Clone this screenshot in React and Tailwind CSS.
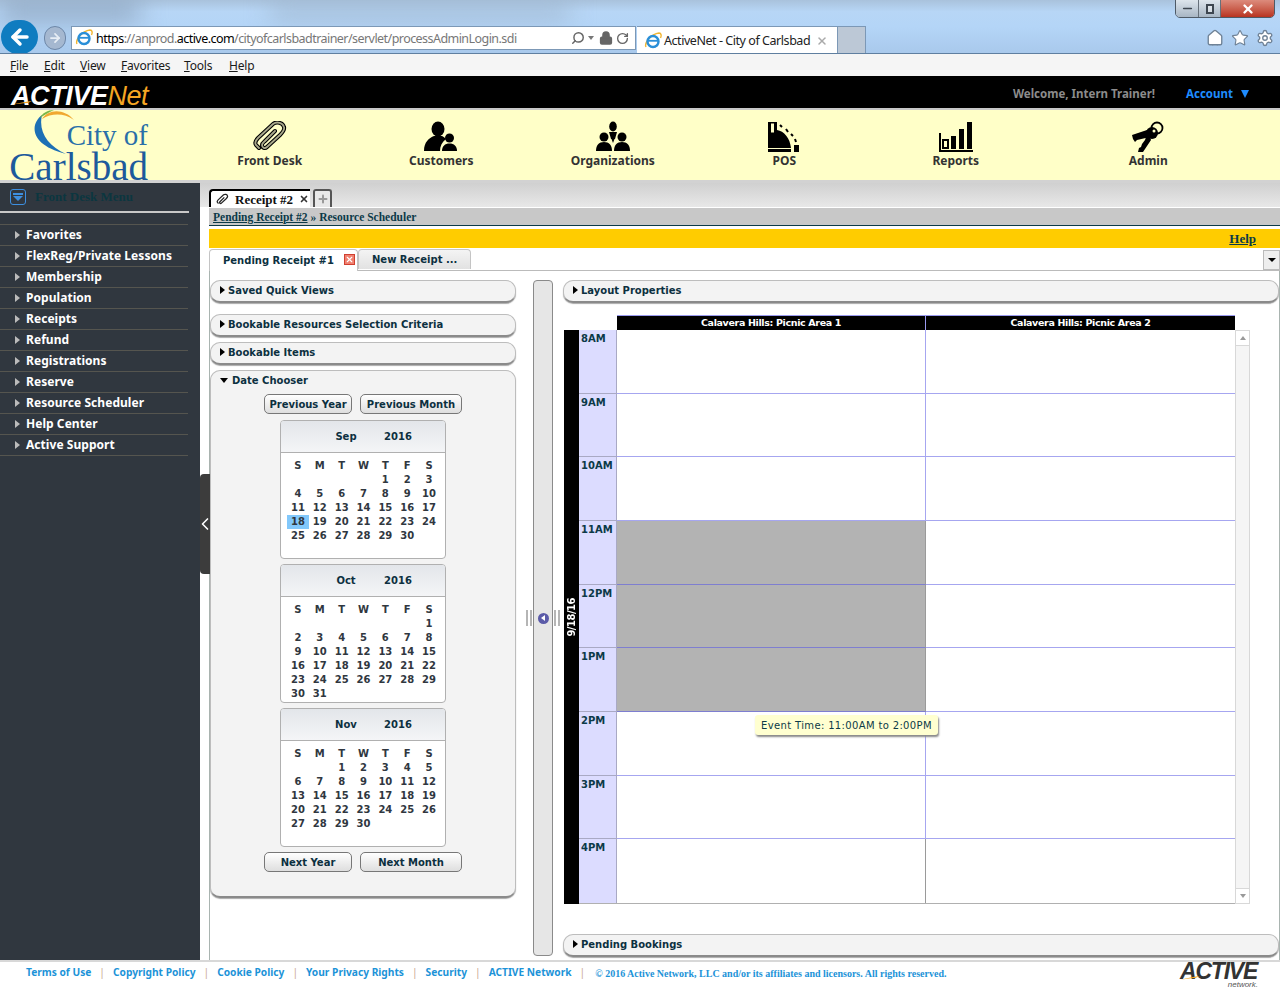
import { Search, Lock, RotateCw, Home, Star, Settings, ChevronLeft, ArrowLeft, ArrowRight, X, Plus, Minus } from 'lucide-react';

const verdana = 'font-["DejaVu_Sans",sans-serif]';
const tahoma = 'font-["Noto_Sans",sans-serif]';
const serif = 'font-["Liberation_Serif",serif]';
const arial = 'font-["Liberation_Sans",sans-serif]';

const menuItems = [
  'Favorites',
  'FlexReg/Private Lessons',
  'Membership',
  'Population',
  'Receipts',
  'Refund',
  'Registrations',
  'Reserve',
  'Resource Scheduler',
  'Help Center',
  'Active Support',
];

const footerLinks = ['Terms of Use', 'Copyright Policy', 'Cookie Policy', 'Your Privacy Rights', 'Security', 'ACTIVE Network'];
const hours = ['8AM', '9AM', '10AM', '11AM', '12PM', '1PM', '2PM', '3PM', '4PM'];

function IeIcon() {
  return (
    <svg width="18" height="18" viewBox="0 0 18 18" className="shrink-0">
      <path d="M2 15 C0 11 7 2 15 1 C17.500 1 17.500 4 16.500 6" fill="none" stroke="#f2b632" strokeWidth="1.400" />
      <circle cx="9" cy="9.500" r="5.500" fill="none" stroke="#2a8fd8" strokeWidth="2.400" />
      <path d="M4 8.800 H14.500" stroke="#2a8fd8" strokeWidth="1.800" />
      <path d="M14 13 L10 15" stroke="#2a8fd8" strokeWidth="1.800" />
    </svg>
  );
}

function FrontDeskIcon() {
  return (
    <svg width="36" height="32" viewBox="0 0 36 32">
      <path d="M7 27 L4 24 C2 21 4 19 6 17 L21 3 C25 0 31 2 32 6 C33 9 30 12 28 14 L15 26 C13 28 10 27 10 24 C10 22 12 21 13 20 L23 10" fill="none" stroke="#000" strokeWidth="4" strokeLinecap="round" />
      <path d="M7 27 L4 24 C2 21 4 19 6 17 L21 3 C25 0 31 2 32 6 C33 9 30 12 28 14 L15 26 C13 28 10 27 10 24 C10 22 12 21 13 20 L23 10" fill="none" stroke="#a9a98c" strokeWidth="1.800" strokeLinecap="round" />
    </svg>
  );
}

function CustomersIcon() {
  return (
    <svg width="36" height="32" viewBox="0 0 36 32">
      <ellipse cx="15" cy="8" rx="6.500" ry="7.500" />
      <path d="M1 30 C1 21 6 17 11 15 L19 15 C21 16 22 17 23 18 C19 21 17 25 17 30 Z" />
      <circle cx="26.500" cy="17" r="4.500" />
      <path d="M19 30 C19 25 22 22.500 26.500 22.500 C31 22.500 34 25 34 30 Z" />
    </svg>
  );
}

function OrganizationsIcon() {
  return (
    <svg width="36" height="32" viewBox="0 0 36 32">
      <ellipse cx="18" cy="5.500" rx="3.800" ry="5" />
      <path d="M14 11 H22 L20 18 H19.500 L18 22 L16.500 18 H16 Z" />
      <circle cx="9" cy="16" r="4.500" />
      <path d="M1 30 C1 24 4 21 9 21 C14 21 17 24 17 30 Z" />
      <circle cx="27" cy="16" r="4.500" />
      <path d="M19 30 C19 24 22 21 27 21 C32 21 35 24 35 30 Z" />
    </svg>
  );
}

function PosIcon() {
  return (
    <svg width="36" height="32" viewBox="0 0 36 32">
      <path d="M2 1 H11 V9 C18 10 24 17 25 27 H2 Z" />
      <rect x="5" y="2.500" width="3" height="9" fill="#ffffc8" />
      <rect x="2" y="28" width="23" height="3" />
      <rect x="28" y="24" width="5" height="7" />
      <path d="M14 4 L16 6 M20 8 L22 11 M25 13 L27 15 M29 18 L30 21" stroke="#000" strokeWidth="2" />
    </svg>
  );
}

function ReportsIcon() {
  return (
    <svg width="36" height="32" viewBox="0 0 36 32">
      <path d="M2 12 V30 H35" fill="none" stroke="#000" strokeWidth="2" />
      <rect x="5" y="19" width="5" height="8" fill="none" stroke="#000" strokeWidth="2" />
      <rect x="13" y="15" width="5" height="13" />
      <rect x="21" y="8" width="5" height="20" />
      <rect x="29" y="1" width="5" height="27" />
    </svg>
  );
}

function AdminIcon() {
  return (
    <svg width="36" height="32" viewBox="0 0 36 32">
      <circle cx="27" cy="7" r="5.500" fill="none" stroke="#000" strokeWidth="1.800" />
      <path d="M18 10 L21 19 L13 31 L8 31 L9 27 L11 26 L12 23 L15 19 Z" />
      <path d="M2 14 L17 9 L20 16 L7 19 L5 21 L3 18 Z" />
      <circle cx="22" cy="12" r="6" />
      <circle cx="24" cy="10" r="1.500" fill="#ffffc8" />
    </svg>
  );
}

const navItems = [
  { label: 'Front Desk', icon: <FrontDeskIcon /> },
  { label: 'Customers', icon: <CustomersIcon /> },
  { label: 'Organizations', icon: <OrganizationsIcon /> },
  { label: 'POS', icon: <PosIcon /> },
  { label: 'Reports', icon: <ReportsIcon /> },
];

function Arrow({ open }) {
  if (open) {
    return <span className="w-0 h-0 border-x-[4px] border-x-transparent border-t-[5px] border-t-black" />;
  }
  return <span className="w-0 h-0 border-y-[4px] border-y-transparent border-l-[5px] border-l-black" />;
}

function Panel({ title, className = '' }) {
  return (
    <div className={`h-[23px] flex items-center gap-[3px] pl-[9px] pb-[2px] rounded-[10px] border border-[#bdbdbd] border-b-[#8a8a8a] border-b-2 bg-[#f3f3f3] shadow-[0_1px_1px_#aaa] ${className}`}>
      <Arrow />
      <span className={`${verdana} text-[10px] font-bold text-[#0c3040]`}>{title}</span>
    </div>
  );
}

function Button({ label, width }) {
  return (
    <button className={`${width} h-[20px] rounded-[5px] border border-[#777] bg-gradient-to-b from-white to-[#dedede] ${verdana} text-[10px] font-bold text-[#0c3040]`}>
      {label}
    </button>
  );
}

function Calendar({ month, offset, days, selected }) {
  const cells = [...Array(offset).fill(''), ...Array.from({ length: days }, (_, i) => i + 1)];
  return (
    <div className={`w-[166px] h-[139px] rounded-[4px] border border-[#b0b0b0] bg-white overflow-hidden ${verdana} text-[10px] font-bold`}>
      <div className="h-[32px] flex items-center pl-[40px] border-b border-[#b0b0b0] bg-gradient-to-b from-[#e3e6ea] to-[#f4f5f7] text-[#0c3040]">
        <span className="w-[50px] text-center">{month}</span>
        <span className="w-[54px] text-center">2016</span>
      </div>
      <div className="grid grid-cols-7 w-[153px] ml-[6px] mt-[6px] text-center text-[#30373f]">
        {['S', 'M', 'T', 'W', 'T', 'F', 'S'].map((d, i) => (
          <span key={i} className="h-[14px] leading-[14px]">{d}</span>
        ))}
        {cells.map((d, i) => (
          <span key={i} className={`h-[14px] leading-[14px] ${d === selected ? 'bg-[#82c8fb]' : ''}`}>{d}</span>
        ))}
      </div>
    </div>
  );
}

function BrowserChrome() {
  return (
    <div className="relative h-[54px] shrink-0 bg-[linear-gradient(180deg,#a9c2dc_0%,#b7d6f6_22%,#b4d5f7_50%,#a9c9ec_100%)] overflow-hidden border-b border-[#5f7fa0]">
      <div className="absolute left-[270px] top-[4px] w-[300px] h-[14px] bg-[#9db4cc] blur-md" />
      <div className="absolute left-[0px] top-[0px] w-[140px] h-[20px] bg-[#8fa6c0] blur-md" />

      <div className="absolute left-[1px] top-[20px] w-[37px] h-[34px] rounded-full bg-[#0f7cc0] flex items-center justify-center">
        <ArrowLeft size={24} strokeWidth={3.500} className="text-white" />
      </div>
      <div className="absolute left-[44px] top-[26px] w-[22px] h-[24px] rounded-full border border-[#6d87a8] bg-[#a5b8d0] flex items-center justify-center">
        <ArrowRight size={14} strokeWidth={3} className="text-[#e8eef5]" />
      </div>

      <div className="absolute left-[71px] top-[26px] w-[565px] h-[24px] flex items-center bg-white border border-[#7c98b6] pl-[3px] pr-[6px] gap-[3px]">
        <IeIcon />
        <span className={`${tahoma} pt-[2px] text-[12.500px] tracking-[-0.550px] text-[#777] leading-none`}>
          <span className="text-black">https</span>://anprod.<span className="text-black">active.com</span>/cityofcarlsbadtrainer/servlet/processAdminLogin.sdi
        </span>
        <span className="ml-auto flex items-center gap-[3px] text-[#666]">
          <Search size={14} strokeWidth={2.500} className="-scale-x-100" />
          <span className="w-0 h-0 border-x-[3px] border-x-transparent border-t-[4px] border-t-[#777] mr-[2px]" />
          <Lock size={14} strokeWidth={3} className="fill-[#666]" />
          <RotateCw size={13} strokeWidth={2.500} />
        </span>
      </div>

      <div className="absolute left-[637px] top-[26px] w-[200px] h-[28px] flex items-center bg-white border-t border-[#7c98b6] pl-[7px] pr-[9px] gap-[2px]">
        <IeIcon />
        <span className={`${tahoma} pt-[2px] text-[12.500px] tracking-[-0.450px] text-[#222] whitespace-nowrap`}>ActiveNet - City of Carlsbad</span>
        <X size={12} strokeWidth={3} className="ml-auto text-[#aaa] shrink-0" />
      </div>
      <div className="absolute left-[837px] top-[26px] w-[29px] h-[28px] bg-[#bcc8d6] border border-[#7c98b6]" />

      <div className="absolute left-[1206px] top-[29px] flex gap-[7px] text-white">
        <Home size={18} strokeWidth={1.800} className="stroke-[#6f8296] fill-white" />
        <Star size={18} strokeWidth={1.500} className="stroke-[#6f8296] fill-white" />
        <Settings size={18} strokeWidth={1.800} className="stroke-[#6f8296] fill-white" />
      </div>

      <div className="absolute left-[1175px] top-[-1px] w-[100px] h-[19px] flex rounded-b-[5px] border border-[#4e5a66] overflow-hidden">
        <div className="w-[23px] flex items-center justify-center bg-gradient-to-b from-[#dde5ec] to-[#a8b6c4] border-r border-[#66707a]">
          <Minus size={13} strokeWidth={3} className="text-[#3d4650]" />
        </div>
        <div className="w-[22px] flex items-center justify-center bg-gradient-to-b from-[#dde5ec] to-[#a8b6c4] border-r border-[#66707a]">
          <span className="w-[8px] h-[10px] border-2 border-[#3d4650] bg-white/40" />
        </div>
        <div className="flex-1 flex items-center justify-center bg-gradient-to-b from-[#dc8b7c] to-[#b8321f]">
          <X size={14} strokeWidth={4} className="text-white" />
        </div>
      </div>
    </div>
  );
}

function MenuBar() {
  const items = [
    ['F', 'ile', 'w-[34px]'],
    ['E', 'dit', 'w-[36px]'],
    ['V', 'iew', 'w-[41px]'],
    ['F', 'avorites', 'w-[63px]'],
    ['T', 'ools', 'w-[45px]'],
    ['H', 'elp', 'w-[40px]'],
  ];
  return (
    <div className={`h-[22px] shrink-0 flex items-center pl-[10px] pt-[2px] bg-[#f5f5f5] ${tahoma} text-[12px] tracking-[-0.200px] text-[#1a1a1a]`}>
      {items.map(([first, rest, width]) => (
        <span key={first + rest} className={width}>
          <span className="underline">{first}</span>
          {rest}
        </span>
      ))}
    </div>
  );
}

function TopBar() {
  return (
    <div className="h-[34px] shrink-0 flex items-center bg-black border-b-2 border-[#c8c8c8] pt-[6px]">
      <div className={`relative ml-[11px] mt-[3px] ${arial} italic text-[27px] leading-none whitespace-nowrap`}>
        <span className="font-bold text-white tracking-[-0.400px]">ACTIVE</span>
        <span className="text-[#f5a623] tracking-[-0.500px]">Net</span>
        <svg width="30" height="12" viewBox="0 0 26 12" className="absolute left-[-3px] top-[11px]">
          <path d="M0 11 C8 9 14 8 22 7 L18 9 C12 9 6 10 0 11 Z" fill="#f5a623" />
        </svg>
      </div>
      <span className={`ml-auto mb-[2px] ${tahoma} text-[11.500px] font-bold text-[#8c8c8c]`}>Welcome, Intern Trainer!</span>
      <span className={`ml-[31px] mb-[2px] ${tahoma} text-[11.500px] font-bold text-[#1e8cff]`}>Account</span>
      <span className="ml-[8px] mr-[31px] mb-[2px] w-0 h-0 border-x-[4px] border-x-transparent border-t-[8px] border-t-[#1e8cff]" />
    </div>
  );
}

function NavBar() {
  return (
    <div className="h-[73px] shrink-0 flex bg-[#ffffc8] border-b-[3px] border-[#d2d2d2]">
      <div className={`relative w-[184px] shrink-0 flex flex-col items-end pr-[36px] ${serif} whitespace-nowrap`}>
        <svg width="50" height="48" viewBox="0 0 50 48" className="absolute left-[30px] top-0">
          <path d="M12 5 C0 14 -1 35 36 44 C18 36 8 22 12 5 Z" fill="#1d70b5" />
          <path d="M12 9 C18 -1 34 -2 44 10 C34 3 22 3 12 9 Z" fill="#f0a830" />
          <path d="M10 8 C12 3 18 0 24 0 C18 3 14 5 10 8 Z" fill="#7ab648" />
        </svg>
        <span className="mt-[8px] text-[29px] leading-[34px] text-[#2a6fa8]">City of</span>
        <span className="text-[39px] leading-[30px] text-[#1d5a9c]">Carlsbad</span>
      </div>
      {navItems.map((item) => (
        <div key={item.label} className="w-[171.500px] shrink-0 flex flex-col items-center pt-[11px]">
          {item.icon}
          <span className={`${tahoma} mt-[-1px] text-[12px] font-bold text-[#333]`}>{item.label}</span>
        </div>
      ))}
      <div className="w-[171.500px] shrink-0 ml-[21px] flex flex-col items-center pt-[11px]">
        <AdminIcon />
        <span className={`${tahoma} mt-[-1px] text-[12px] font-bold text-[#333]`}>Admin</span>
      </div>
    </div>
  );
}

function Sidebar() {
  return (
    <aside className="w-[200px] shrink-0 bg-[#30373f]">
      <div className="h-[30px] flex items-center pl-[10px] gap-[9px] w-[189px] border-b-2 border-[#c8c8c8]">
        <span className="w-[16px] h-[16px] rounded-[3px] border border-[#3d8fe0] flex flex-col items-center justify-center gap-[1px]">
          <span className="w-[10px] h-[2px] bg-[#3d8fe0]" />
          <span className="w-0 h-0 border-x-[5px] border-x-transparent border-t-[5px] border-t-[#3d8fe0]" />
        </span>
        <span className={`${serif} text-[13px] font-bold text-[#0b3640]`}>Front Desk Menu</span>
      </div>
      <div className="mt-[11px] w-[188px] border-t border-[#55554f]">
        {menuItems.map((item) => (
          <div key={item} className="h-[21px] flex items-center pl-[15px] gap-[6px] border-b border-[#55554f]">
            <span className="w-0 h-0 border-y-[4px] border-y-transparent border-l-[5px] border-l-[#bbb]" />
            <span className={`${tahoma} text-[12px] font-bold text-white tracking-[0.050px]`}>{item}</span>
          </div>
        ))}
      </div>
    </aside>
  );
}

function LeftColumn() {
  return (
    <div className="w-[307px] shrink-0 flex flex-col">
      <Panel title="Saved Quick Views" className="w-[306px]" />
      <Panel title="Bookable Resources Selection Criteria" className="w-[306px] mt-[11px]" />
      <Panel title="Bookable Items" className="w-[306px] mt-[5px]" />
      <div className="mt-[5px] w-[306px] h-[528px] flex flex-col items-center rounded-[10px] border border-[#bdbdbd] border-b-[#8a8a8a] border-b-2 bg-[#f3f3f3] shadow-[0_1px_1px_#aaa]">
        <div className="self-start h-[19px] flex items-center gap-[4px] pl-[9px]">
          <Arrow open />
          <span className={`${verdana} text-[10px] font-bold text-[#0c3040]`}>Date Chooser</span>
        </div>
        <div className="mt-[4px] flex gap-[8px]">
          <Button label="Previous Year" width="w-[88px]" />
          <Button label="Previous Month" width="w-[102px]" />
        </div>
        <div className="mt-[6px] flex flex-col gap-[5px]">
          <Calendar month="Sep" offset={4} days={30} selected={18} />
          <Calendar month="Oct" offset={6} days={31} />
          <Calendar month="Nov" offset={2} days={30} />
        </div>
        <div className="mt-[5px] flex gap-[8px]">
          <Button label="Next Year" width="w-[88px]" />
          <Button label="Next Month" width="w-[102px]" />
        </div>
      </div>
    </div>
  );
}

function Collapser() {
  return (
    <div className="relative w-[20px] h-[676px] ml-[16px] shrink-0 flex items-center justify-center rounded-[4px] border border-[#8a8a8a] bg-[#e6e6e6]">
      <span className="absolute left-[-8px] top-[329px] w-[6px] h-[16px] border-x-2 border-[#b5b5b5]" />
      <span className="w-[11px] h-[11px] rounded-full bg-[#5b5ba8] flex items-center justify-center">
        <span className="w-0 h-0 border-y-[3px] border-y-transparent border-r-[4px] border-r-white" />
      </span>
      <span className="absolute right-[-8px] top-[329px] w-[6px] h-[16px] border-x-2 border-[#b5b5b5]" />
    </div>
  );
}

function Scheduler() {
  return (
    <div>
      <div className={`ml-[54px] w-[618px] h-[15px] flex bg-black border-t border-[#9a9aee] ${verdana} text-[9.500px] font-bold text-white leading-[14px] tracking-[-0.350px]`}>
        <span className="w-[309px] text-center border-r border-[#9a9aee]">Calavera Hills: Picnic Area 1</span>
        <span className="w-[309px] text-center">Calavera Hills: Picnic Area 2</span>
      </div>
      <div className="relative flex h-[574px] ml-px">
        <div className="w-[15px] flex items-center justify-center bg-black">
          <span className={`[writing-mode:vertical-rl] rotate-180 ${verdana} text-[10px] font-bold text-white tracking-[-0.500px]`}>9/18/16</span>
        </div>
        <div className="w-[656px] grid grid-cols-[38px_309px_309px] grid-rows-9 border-b border-[#b0b0b0]">
          {hours.map((hour, i) => {
            const booked = i >= 3 && i <= 5;
            const line = i === 8 ? '' : 'border-b border-[#a6a6f0]';
            return (
              <div key={hour} className="contents">
                <div className={`bg-[#dcdcff] border-r border-[#a9a9c4] pl-[2px] pt-px ${verdana} text-[10px] font-bold text-[#0c3a48] ${line}`}>
                  {hour}
                </div>
                <div className={`border-r border-[#9a9a9a] ${booked ? 'bg-[#b3b3b3] border-b border-b-[#7e7ed0]' : 'bg-white'} ${booked ? '' : line}`} />
                <div className={`bg-white ${line}`} />
              </div>
            );
          })}
        </div>
        <div className="w-[15px] flex flex-col justify-between border border-[#d8d8d8] bg-[#f5f5f5]">
          <div className="h-[15px] bg-white border-b border-[#d8d8d8] flex items-center justify-center">
            <span className="w-0 h-0 border-x-[3px] border-x-transparent border-b-[4px] border-b-[#999]" />
          </div>
          <div className="h-[15px] bg-white border-t border-[#d8d8d8] flex items-center justify-center">
            <span className="w-0 h-0 border-x-[3px] border-x-transparent border-t-[4px] border-t-[#999]" />
          </div>
        </div>
        <div className={`absolute left-[191px] top-[385px] w-[183px] h-[20px] flex items-center justify-center rounded-[3px] bg-[#ffffd0] shadow-[1px_2px_2px_#888] ${verdana} text-[10px] tracking-[0.350px] text-[#0c3a48] whitespace-nowrap`}>
          Event Time: 11:00AM to 2:00PM
        </div>
      </div>
    </div>
  );
}

function Main() {
  return (
    <main className="relative flex-1 min-w-0 flex flex-col bg-white">
      <div className="absolute left-0 top-[291px] w-[10px] h-[100px] rounded-l-[4px] bg-[#3c3c3c] flex items-center justify-center">
        <ChevronLeft size={20} strokeWidth={2} className="text-white shrink-0" />
      </div>
      <div className="h-[25px] pl-[9px] bg-gradient-to-b from-[#d0d0d0] to-[#e8e8e8] flex items-end gap-[3px] border-b border-white">
        <div className={`w-[101px] h-[18px] flex items-center pl-[5px] bg-white border-t-2 border-l-2 border-black rounded-tl-[4px] ${serif} text-[13px] font-bold text-[#111] whitespace-nowrap`}>
          <svg width="13" height="13" viewBox="0 0 36 32" className="shrink-0 mr-[6px]">
            <path d="M7 27 L4 24 C2 21 4 19 6 17 L21 3 C25 0 31 2 32 6 C33 9 30 12 28 14 L15 26 C13 28 10 27 10 24 C10 22 12 21 13 20 L23 10" fill="none" stroke="#222" strokeWidth="3.500" />
          </svg>
          <span className="pt-[2px]">Receipt #2</span>
          <X size={10} strokeWidth={4} className="ml-auto mr-px text-[#333] shrink-0" />
        </div>
        <div className="w-[19px] h-[18px] flex items-center justify-center rounded-t-[3px] border-2 border-b-0 border-[#555] bg-[#e8e8e8]">
          <Plus size={12} strokeWidth={4} className="text-[#999]" />
        </div>
      </div>

      <div className={`ml-[9px] h-[18px] pl-[4px] pt-[2px] flex items-center bg-[#c8c8c8] border-b border-[#0c3a48] ${serif} text-[11.500px] font-bold text-[#0c3a48]`}>
        <span className="underline">Pending Receipt #2</span>
        <span className="ml-[3px]">» Resource Scheduler</span>
      </div>

      <div className={`ml-[9px] mt-[3px] h-[19px] flex items-center justify-end pr-[24px] bg-[#ffcc00] ${serif} text-[13px] font-bold text-[#0c3a48] underline`}>
        Help
      </div>

      <div className={`ml-[9px] mt-px h-[22px] flex items-end ${verdana} text-[10px] font-bold text-[#0c3040] border-b border-[#bbb]`}>
        <div className="relative w-[149px] h-[22px] mb-[-1px] flex items-center pl-[13px] bg-white border border-b-0 border-[#c4c4c4] rounded-t-[4px]">
          Pending Receipt #1
          <span className="absolute right-[2px] top-[4px] w-[11px] h-[11px] bg-[#f08070] border border-[#d04030] flex items-center justify-center">
            <X size={9} strokeWidth={3} className="text-white" />
          </span>
        </div>
        <div className="w-[113px] h-[20px] flex items-center pl-[13px] bg-gradient-to-b from-[#f4f4f4] to-[#e2e2e2] border border-b-0 border-[#c4c4c4] rounded-t-[4px] mb-px">
          New Receipt ...
        </div>
        <div className="ml-auto w-[17px] h-[20px] flex items-center justify-center bg-[#eee] border border-[#bbb]">
          <span className="w-0 h-0 border-x-[4px] border-x-transparent border-t-[4px] border-t-black" />
        </div>
      </div>

      <div className="ml-[9px] flex-1 min-h-0 flex pt-[9px] border-l border-r border-[#a9b4b0] pr-0">
        <LeftColumn />
        <Collapser />
        <div className="ml-[10px] flex-1 min-w-0 flex flex-col">
          <Panel title="Layout Properties" />
          <div className="mt-[12px]">
            <Scheduler />
          </div>
          <Panel title="Pending Bookings" className="mt-[30px]" />
        </div>
      </div>
    </main>
  );
}

function Footer() {
  return (
    <footer className="relative h-[36px] shrink-0 flex items-start pt-[3px] pl-[26px] bg-white border-t-2 border-[#d8d8d8]">
      {footerLinks.map((link) => (
        <span key={link} className={`${tahoma} text-[10.200px] font-bold text-[#1c93d8] whitespace-nowrap`}>
          {link}
          <span className="mx-[8px] font-normal text-[#c8a590]">|</span>
        </span>
      ))}
      <span className={`${serif} ml-[2px] mt-px text-[10px] font-bold text-[#1c93d8] whitespace-nowrap`}>
        © 2016 Active Network, LLC and/or its affiliates and licensors. All rights reserved.
      </span>
      <div className={`absolute left-[1180px] top-[-1px] w-[78px] ${arial} italic whitespace-nowrap`}>
        <span className="text-[23px] leading-[21px] font-bold text-[#333] tracking-[-1.200px] block">ACTIVE</span>
        <span className="block text-right text-[8px] leading-[5px] text-[#555]">network.</span>
        <svg width="20" height="8" viewBox="0 0 20 8" className="absolute left-0 top-[12px]">
          <path d="M0 7 C6 5 12 4 20 3 L15 5 C10 5 5 6 0 7 Z" fill="#f5a623" />
        </svg>
      </div>
    </footer>
  );
}

export default function App() {
  return (
    <div className="w-[1280px] h-[996px] flex flex-col overflow-hidden bg-white">
      <BrowserChrome />
      <MenuBar />
      <TopBar />
      <NavBar />
      <div className="flex-1 min-h-0 flex">
        <Sidebar />
        <Main />
      </div>
      <Footer />
    </div>
  );
}
